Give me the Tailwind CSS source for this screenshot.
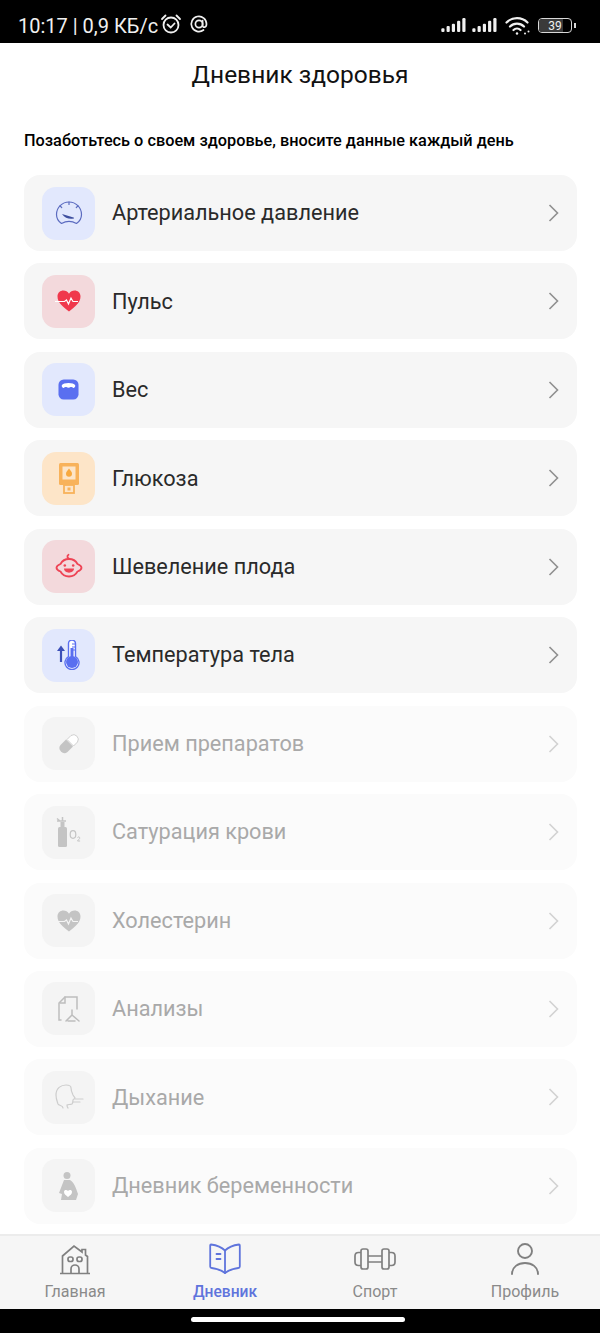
<!DOCTYPE html>
<html lang="ru">
<head>
    <meta charset="UTF-8">
    <meta name="viewport" content="width=device-width, initial-scale=1.0">
    <title>Дневник здоровья</title>
    <script src="https://cdn.jsdelivr.net/npm/@tailwindcss/browser@4"></script>
</head>
<body class="w-[600px] h-[1333px] bg-white font-['Roboto',sans-serif] overflow-hidden flex flex-col">

    <!-- Status bar -->
    <div class="h-[43px] bg-black text-[#f0f0f0] flex items-center justify-between pl-[18px] pr-[24px] pt-[8px] shrink-0">
        <div class="flex items-center">
            <span class="text-[20px] leading-none">10:17 | 0,9 КБ/с</span>
            <svg class="w-[22px] h-[22px] ml-[2px] -mt-[3px]" viewBox="0 0 22 22" fill="none" stroke="currentColor" stroke-width="1.8">
                <circle cx="11" cy="12" r="7.5"/>
                <path d="M7.5 11.5l3.2 3 3.800-4M2 6l3.500-3.500M20 6l-3.500-3.500" stroke-linecap="round"/>
            </svg>
            <svg class="w-[20px] h-[20px] ml-[7px] -mt-[3px]" viewBox="0 0 20 20" fill="none" stroke="currentColor" stroke-width="1.7">
                <circle cx="10" cy="10" r="3.600"/>
                <path d="M13.600 6.500v5c0 2.600 3.900 2.400 3.900-1.500a7.600 7.600 0 1 0-3 6" stroke-linecap="round"/>
            </svg>
        </div>
        <div class="flex items-center">
            <svg class="w-[25px] h-[15px]" viewBox="0 0 26 16" fill="currentColor">
                <rect x="0" y="11" width="3.400" height="4" rx="1.200"/><rect x="5.600" y="8.500" width="3.400" height="6.500" rx="1.200"/><rect x="11.200" y="6" width="3.400" height="9" rx="1.200"/><rect x="16.800" y="3" width="3.400" height="12" rx="1.200"/><rect x="22.400" y="0" width="3.400" height="15" rx="1.200"/>
            </svg>
            <svg class="w-[25px] h-[15px] ml-[6px]" viewBox="0 0 26 16" fill="currentColor">
                <rect x="0" y="11" width="3.400" height="4" rx="1.200"/><rect x="5.600" y="8.500" width="3.400" height="6.500" rx="1.200"/><rect x="11.200" y="6" width="3.400" height="9" rx="1.200"/><rect x="16.800" y="3" width="3.400" height="12" rx="1.200"/><rect x="22.400" y="0" width="3.400" height="15" rx="1.200"/>
            </svg>
            <svg class="w-[26px] h-[20px] ml-[8px]" viewBox="0 0 26 20" fill="none" stroke="currentColor" stroke-width="2.200" stroke-linecap="round">
                <path d="M1.500 6.500a15 15 0 0 1 21 0M5 10.500a10 10 0 0 1 14 0M8.500 14a5 5 0 0 1 7 0"/>
                <circle cx="12" cy="17.500" r="1.200" fill="currentColor" stroke="none"/>
                <circle cx="20" cy="17.500" r="1" fill="currentColor" stroke="none"/><circle cx="23.500" cy="15.500" r="1" fill="currentColor" stroke="none"/>
            </svg>
            <div class="ml-[7px] w-[34px] h-[15px] border border-[#d8d8d8] rounded-[4px] relative flex items-center justify-center overflow-hidden">
                <div class="absolute left-0 top-0 bottom-0 w-[24px] bg-[#3a3a3a]"></div>
                <span class="relative text-[12px] leading-none">39</span>
            </div>
            <div class="w-[2px] h-[5px] bg-[#d8d8d8] ml-[2px]"></div>
        </div>
    </div>

    <h1 class="h-[65px] shrink-0 flex items-center justify-center text-[24.5px] text-[#111]">Дневник здоровья</h1>

    <p class="mt-[22px] ml-[24px] text-[16.3px] leading-[22px] font-medium text-black">Позаботьтесь о своем здоровье, вносите данные каждый день</p>

    <!-- Records -->
    <div class="mt-[23px] ml-[24px] mr-[23px] flex flex-col gap-[12.45px]">

        <a class="h-[76px] rounded-[16px] bg-[#f6f6f6] flex items-center pl-[18px] pr-[18px]">
            <span class="w-[53px] h-[53px] rounded-[14px] bg-[#e2e8fd] flex items-center justify-center">
                <svg class="w-[28px] h-[28px]" viewBox="0 0 28 28" fill="none" stroke="#5b6bc0" stroke-width="1.200" stroke-linecap="round" stroke-linejoin="round">
                    <path d="M6.500 24.500C3.500 22.500 1.500 19 1.500 15.500a12.500 12.500 0 0 1 25 0c0 3.500-2 7-5 9-4.500-2.500-10.500-2.500-15 0z"/>
                    <path d="M14 3v2.500M5 6.800l1.700 1.700M23 6.800l-1.700 1.700"/>
                    <path d="M7 15l11.500 3.500c.8.300.8 1 0 1.100C14 20.500 10 19 7 15z" fill="#3f4f9f" stroke="none"/>
                </svg>
            </span>
            <span class="ml-[17px] mt-[1px] text-[21.7px] text-[#2a2a2a]">Артериальное давление</span>
            <svg class="ml-auto w-[11px] h-[18px]" viewBox="0 0 11 18" fill="none" stroke="#8f8f8f" stroke-width="1.600"><path d="M1.500 1l8 8-8 8"/></svg>
        </a>

        <a class="h-[76px] rounded-[16px] bg-[#f6f6f6] flex items-center pl-[18px] pr-[18px]">
            <span class="w-[53px] h-[53px] rounded-[14px] bg-[#f3d9dc] flex items-center justify-center">
                <svg class="w-[28px] h-[28px]" viewBox="0 0 28 28">
                    <path d="M14 24.500C8 20 2.500 15.500 2.500 9.500 2.500 5.500 5.500 3.500 8.300 3.500c2.400 0 4.400 1.200 5.700 3.200 1.300-2 3.300-3.200 5.700-3.200 2.800 0 5.800 2 5.800 6 0 6-5.500 10.500-11.500 15z" fill="#f0384c"/>
                    <path d="M0 14.500h9.500l2-1.500 2 4 2.500-6 2 3.500h5" fill="none" stroke="#fff" stroke-width="1.200"/>
                </svg>
            </span>
            <span class="ml-[17px] mt-[1px] text-[21.7px] text-[#2a2a2a]">Пульс</span>
            <svg class="ml-auto w-[11px] h-[18px]" viewBox="0 0 11 18" fill="none" stroke="#8f8f8f" stroke-width="1.600"><path d="M1.500 1l8 8-8 8"/></svg>
        </a>

        <a class="h-[76px] rounded-[16px] bg-[#f6f6f6] flex items-center pl-[18px] pr-[18px]">
            <span class="w-[53px] h-[53px] rounded-[14px] bg-[#e2e8fd] flex items-center justify-center">
                <svg class="w-[21px] h-[21px]" viewBox="0 0 22 22">
                    <rect x="0.500" y="0.500" width="21" height="21" rx="5.500" fill="#5a6ff0"/>
                    <path d="M4 6.500C5.500 3.500 16.500 3.500 18 6.500c.5 1.200-.7 2.800-2 3-.8-1.200-2-1.500-2.800-1-1.200.8-3.200.8-4.400 0-.8-.5-2-.2-2.800 1-1.300-.2-2.500-1.800-2-3z" fill="#fff"/>
                </svg>
            </span>
            <span class="ml-[17px] mt-[1px] text-[21.7px] text-[#2a2a2a]">Вес</span>
            <svg class="ml-auto w-[11px] h-[18px]" viewBox="0 0 11 18" fill="none" stroke="#8f8f8f" stroke-width="1.600"><path d="M1.500 1l8 8-8 8"/></svg>
        </a>

        <a class="h-[76px] rounded-[16px] bg-[#f6f6f6] flex items-center pl-[18px] pr-[18px]">
            <span class="w-[53px] h-[53px] rounded-[14px] bg-[#fde5c8] flex items-center justify-center">
                <svg class="w-[28px] h-[32px]" viewBox="0 0 28 32">
                    <rect x="4" y="1" width="20" height="22" rx="1.500" fill="#f8b25a"/>
                    <rect x="7.500" y="4.500" width="13" height="13" fill="#fde5c8"/>
                    <path d="M14 6.500c2 2.500 3 3.700 3 5.200a3 3 0 0 1-6 0c0-1.500 1-2.700 3-5.200z" fill="#f8a93f"/>
                    <rect x="9" y="23" width="10" height="8" fill="none" stroke="#f8b25a" stroke-width="1.800"/>
                    <rect x="12.500" y="25.500" width="3" height="3" fill="#f8b25a"/>
                </svg>
            </span>
            <span class="ml-[17px] mt-[1px] text-[21.7px] text-[#2a2a2a]">Глюкоза</span>
            <svg class="ml-auto w-[11px] h-[18px]" viewBox="0 0 11 18" fill="none" stroke="#8f8f8f" stroke-width="1.600"><path d="M1.500 1l8 8-8 8"/></svg>
        </a>

        <a class="h-[76px] rounded-[16px] bg-[#f6f6f6] flex items-center pl-[18px] pr-[18px]">
            <span class="w-[53px] h-[53px] rounded-[14px] bg-[#f3d9dc] flex items-center justify-center">
                <svg class="w-[28px] h-[28px]" viewBox="0 0 28 28" fill="none" stroke="#ee4455" stroke-width="1.800" stroke-linecap="round" stroke-linejoin="round">
                    <path d="M5.500 11a9.500 9 0 0 1 17 0c2 .8 4 2.200 4 3.800s-2 3-4 3.700a9.500 9 0 0 1-17 0c-2-.7-4-2.100-4-3.700S3.500 11.800 5.500 11z"/>
                    <path d="M14.500 5.800c-2-.3-3-2.800-1-4"/>
                    <circle cx="9.800" cy="12.500" r="1.300" fill="#ee4455" stroke="none"/><circle cx="18.200" cy="12.500" r="1.300" fill="#ee4455" stroke="none"/>
                    <path d="M9 15.500h10c0 5.500-10 5.500-10 0z" fill="#ee4455" stroke="none"/>
                </svg>
            </span>
            <span class="ml-[17px] mt-[1px] text-[21.7px] text-[#2a2a2a]">Шевеление плода</span>
            <svg class="ml-auto w-[11px] h-[18px]" viewBox="0 0 11 18" fill="none" stroke="#8f8f8f" stroke-width="1.600"><path d="M1.500 1l8 8-8 8"/></svg>
        </a>

        <a class="h-[76px] rounded-[16px] bg-[#f6f6f6] flex items-center pl-[18px] pr-[18px]">
            <span class="w-[53px] h-[53px] rounded-[14px] bg-[#e2e8fd] flex items-center justify-center">
                <svg class="w-[24px] h-[30px]" viewBox="0 0 24 30">
                    <path d="M4 9v13" stroke="#3c4fb8" stroke-width="2.200" fill="none"/>
                    <path d="M0 11l4-5.500L8 11z" fill="#3c4fb8"/>
                    <path d="M11.500 3.500a3.500 3.500 0 0 1 7 0v13a7 7 0 1 1-7 0z" fill="#fff" stroke="#5a6ff0" stroke-width="1.400"/>
                    <circle cx="15" cy="22" r="6" fill="#5a6ff0"/>
                    <rect x="13.500" y="8" width="3" height="12" fill="#5a6ff0"/>
                    <path d="M15 4h3M15 7h3M15 10h3" stroke="#5a6ff0" stroke-width="1"/>
                </svg>
            </span>
            <span class="ml-[17px] mt-[1px] text-[21.7px] text-[#2a2a2a]">Температура тела</span>
            <svg class="ml-auto w-[11px] h-[18px]" viewBox="0 0 11 18" fill="none" stroke="#8f8f8f" stroke-width="1.600"><path d="M1.500 1l8 8-8 8"/></svg>
        </a>

        <!-- inactive -->
        <a class="h-[76px] rounded-[16px] bg-[#fbfbfb] flex items-center pl-[18px] pr-[18px]">
            <span class="w-[53px] h-[53px] rounded-[14px] bg-[#f4f4f4] flex items-center justify-center">
                <svg class="w-[22px] h-[22px]" viewBox="0 0 22 22">
                    <path d="M13 2.500a4.700 4.700 0 0 1 6.500 6.500l-4 4L9 6.500z" fill="#fff" stroke="#c4c4c4" stroke-width="0.800"/>
                    <path d="M8 6.500l7 7-5.500 5.500a5 5 0 0 1-7-7z" fill="#c4c4c4"/>
                </svg>
            </span>
            <span class="ml-[17px] mt-[1px] text-[21.7px] text-[#a9a9a9]">Прием препаратов</span>
            <svg class="ml-auto w-[11px] h-[18px]" viewBox="0 0 11 18" fill="none" stroke="#d2d2d2" stroke-width="1.600"><path d="M1.500 1l8 8-8 8"/></svg>
        </a>

        <a class="h-[76px] rounded-[16px] bg-[#fbfbfb] flex items-center pl-[18px] pr-[18px]">
            <span class="w-[53px] h-[53px] rounded-[14px] bg-[#f4f4f4] flex items-center justify-center">
                <svg class="w-[26px] h-[32px]" viewBox="0 0 26 32">
                    <rect x="2" y="11" width="9" height="20" rx="1.500" fill="#c4c4c4"/>
                    <rect x="4.500" y="6" width="4" height="5" fill="#c4c4c4"/>
                    <path d="M1 5h9M1 2.500l3 2.500M6.500 1v4" stroke="#c4c4c4" stroke-width="1.500" fill="none"/>
                    <ellipse cx="17" cy="18.500" rx="2.800" ry="3.800" fill="none" stroke="#c4c4c4" stroke-width="1.200"/>
                    <path d="M21.500 21.500c.5-1 2.500-.6 2.300.6-.1.700-1.500 1.500-2.300 2.900h2.600" fill="none" stroke="#c4c4c4" stroke-width="1"/>
                </svg>
            </span>
            <span class="ml-[17px] mt-[1px] text-[21.7px] text-[#a9a9a9]">Сатурация крови</span>
            <svg class="ml-auto w-[11px] h-[18px]" viewBox="0 0 11 18" fill="none" stroke="#d2d2d2" stroke-width="1.600"><path d="M1.500 1l8 8-8 8"/></svg>
        </a>

        <a class="h-[76px] rounded-[16px] bg-[#fbfbfb] flex items-center pl-[18px] pr-[18px]">
            <span class="w-[53px] h-[53px] rounded-[14px] bg-[#f4f4f4] flex items-center justify-center">
                <svg class="w-[28px] h-[28px]" viewBox="0 0 28 28">
                    <path d="M14 24.500C8 20 2.500 15.500 2.500 9.500 2.500 5.500 5.500 3.500 8.300 3.500c2.400 0 4.400 1.200 5.700 3.200 1.300-2 3.300-3.200 5.700-3.200 2.800 0 5.800 2 5.800 6 0 6-5.500 10.500-11.500 15z" fill="#c4c4c4"/>
                    <path d="M0 14.500h9.500l2-1.500 2 4 2.500-6 2 3.500h5" fill="none" stroke="#f4f4f4" stroke-width="1.200"/>
                </svg>
            </span>
            <span class="ml-[17px] mt-[1px] text-[21.7px] text-[#a9a9a9]">Холестерин</span>
            <svg class="ml-auto w-[11px] h-[18px]" viewBox="0 0 11 18" fill="none" stroke="#d2d2d2" stroke-width="1.600"><path d="M1.500 1l8 8-8 8"/></svg>
        </a>

        <a class="h-[76px] rounded-[16px] bg-[#fbfbfb] flex items-center pl-[18px] pr-[18px]">
            <span class="w-[53px] h-[53px] rounded-[14px] bg-[#f4f4f4] flex items-center justify-center">
                <svg class="w-[26px] h-[28px]" viewBox="0 0 26 28" fill="none" stroke="#bdbdbd" stroke-width="1.500" stroke-linecap="round">
                    <path d="M5 25H3V8l6-6h12v12"/>
                    <path d="M9 2v6H4"/>
                    <path d="M16 15v5M16 20l-6 6M16 20l7 6M12 26h7"/>
                </svg>
            </span>
            <span class="ml-[17px] mt-[1px] text-[21.7px] text-[#a9a9a9]">Анализы</span>
            <svg class="ml-auto w-[11px] h-[18px]" viewBox="0 0 11 18" fill="none" stroke="#d2d2d2" stroke-width="1.600"><path d="M1.500 1l8 8-8 8"/></svg>
        </a>

        <a class="h-[76px] rounded-[16px] bg-[#fbfbfb] flex items-center pl-[18px] pr-[18px]">
            <span class="w-[53px] h-[53px] rounded-[14px] bg-[#f4f4f4] flex items-center justify-center">
                <svg class="w-[30px] h-[28px]" viewBox="0 0 30 28" fill="none" stroke="#cdcdcd" stroke-width="1.200" stroke-linecap="round">
                    <path d="M9 25c0-3-4-2-5-4-1-3-2-5-2-9C2 5 7 2 12 2c3 0 5 1 5 3 0 3 1 5 2 7l2 3c0 1-2 1-2 2s0 3-1 4c-2 1-4 0-5 1 0 1 0 2 1 3"/>
                    <path d="M21 16h8M19 19h7"/>
                </svg>
            </span>
            <span class="ml-[17px] mt-[1px] text-[21.7px] text-[#a9a9a9]">Дыхание</span>
            <svg class="ml-auto w-[11px] h-[18px]" viewBox="0 0 11 18" fill="none" stroke="#d2d2d2" stroke-width="1.600"><path d="M1.500 1l8 8-8 8"/></svg>
        </a>

        <a class="h-[76px] rounded-[16px] bg-[#fbfbfb] flex items-center pl-[18px] pr-[18px]">
            <span class="w-[53px] h-[53px] rounded-[14px] bg-[#f4f4f4] flex items-center justify-center">
                <svg class="w-[24px] h-[30px]" viewBox="0 0 24 30">
                    <circle cx="10" cy="4.500" r="3.500" fill="#c4c4c4"/>
                    <path d="M7 9h6c4 2 6 8 8 14l-2 6H4l1-6-3-1z" fill="#c4c4c4"/>
                    <path d="M7 21c0-2.500 3-2.500 4-1 1-1.500 4-1.500 4 1 0 2-2 3.500-4 5-2-1.500-4-3-4-5z" fill="#fff"/>
                </svg>
            </span>
            <span class="ml-[17px] mt-[1px] text-[21.7px] text-[#a9a9a9]">Дневник беременности</span>
            <svg class="ml-auto w-[11px] h-[18px]" viewBox="0 0 11 18" fill="none" stroke="#d2d2d2" stroke-width="1.600"><path d="M1.500 1l8 8-8 8"/></svg>
        </a>
    </div>

    <!-- Tab bar -->
    <nav class="mt-auto h-[75px] shrink-0 bg-[#f6f6f6] border-t-2 border-[#ececec] grid grid-cols-4 text-[16px] text-[#8a8a8a] text-center">
        <a class="flex flex-col items-center pt-[7px]">
            <svg class="w-[32px] h-[32px]" viewBox="0 0 32 32" fill="none" stroke="#808080" stroke-width="1.700">
                <path d="M1 30.500h30M3.500 30.500V13L15 3l8 6V6.500h3.500V12l2 1.500v17"/>
                <rect x="9" y="14" width="5" height="4.500" rx="2"/><rect x="18" y="14" width="5" height="4.500" rx="2"/>
                <path d="M12 30.500V26a3.500 3.500 0 0 1 8 0v4.500"/>
            </svg>
            <span class="leading-[18px] mt-[8px]">Главная</span>
        </a>
        <a class="flex flex-col items-center pt-[7px] text-[#5f74dc] font-medium">
            <svg class="w-[32px] h-[32px]" viewBox="0 0 32 32" fill="none" stroke="#5f74dc" stroke-width="1.800" stroke-linejoin="round" stroke-linecap="round">
                <path d="M16 7.500C12 3.500 6 2 2 1.500c-.5 0-.8.500-.8 1v21c0 1 .5 1.500 1.500 1.500 4 .5 9 2 13.300 5 4.300-3 9.300-4.500 13.300-5 1 0 1.500-.5 1.500-1.500v-21c0-.5-.3-1-.8-1-4 .5-10 2-14 6z"/>
                <path d="M16 7.500V30M7.500 11h4M7.500 16h4"/>
            </svg>
            <span class="leading-[18px] mt-[8px] text-[15.6px]">Дневник</span>
        </a>
        <a class="flex flex-col items-center pt-[7px]">
            <svg class="w-[42px] h-[32px]" viewBox="0 0 42 32" fill="none" stroke="#808080" stroke-width="1.700">
                <path d="M7 9.500H4.500C2.500 9.500 1 11 1 13v6c0 2 1.500 3.500 3.500 3.500H7"/>
                <rect x="7" y="6" width="7" height="20" rx="2"/><rect x="28" y="6" width="7" height="20" rx="2"/>
                <path d="M14 13h14M14 19h14M35 9.500h2.500c2 0 3.500 1.500 3.500 3.500v6c0 2-1.500 3.500-3.500 3.500H35"/>
            </svg>
            <span class="leading-[18px] mt-[8px]">Спорт</span>
        </a>
        <a class="flex flex-col items-center pt-[7px]">
            <svg class="w-[32px] h-[32px]" viewBox="0 0 32 32" fill="none" stroke="#808080" stroke-width="1.900" stroke-linecap="round">
                <circle cx="16" cy="8" r="7"/>
                <path d="M3 31c0-7 6-11 13-11s13 4 13 11"/>
            </svg>
            <span class="leading-[18px] mt-[8px]">Профиль</span>
        </a>
    </nav>

    <!-- Gesture bar -->
    <div class="h-[24px] shrink-0 bg-black flex items-start justify-center pt-[8px]">
        <div class="w-[214px] h-[5px] rounded-full bg-white mr-[4px]"></div>
    </div>
</body>
</html>
